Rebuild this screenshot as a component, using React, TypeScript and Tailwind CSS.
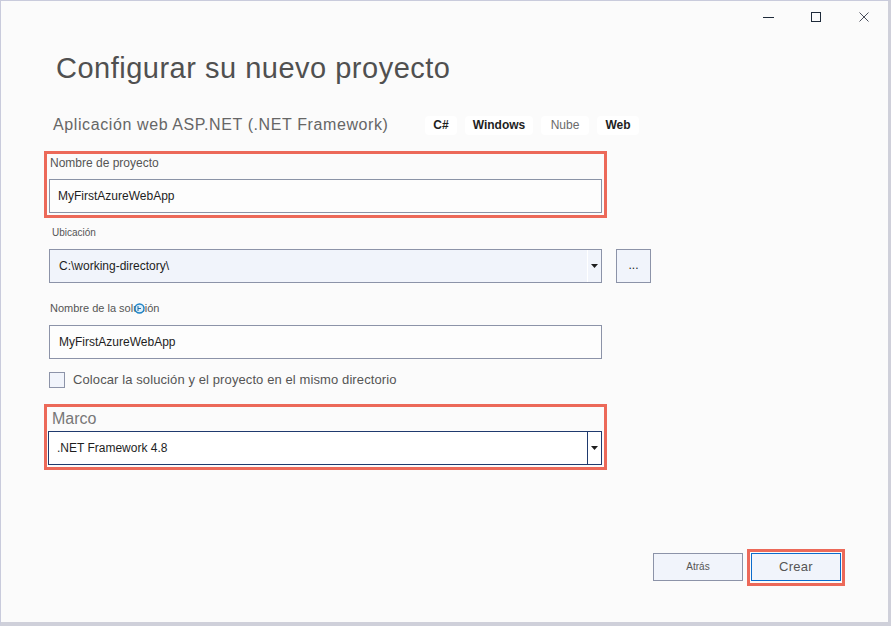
import React from "react";

const font = { fontFamily: '"Liberation Sans", Arial, sans-serif' };

function Arrow() {
  return (
    <svg width="7" height="4" viewBox="0 0 7 4" className="block">
      <path d="M0 0 H7 L3.5 4 Z" fill="#1e1e1e" />
    </svg>
  );
}

function Tag({ children, muted }: { children: React.ReactNode; muted?: boolean }) {
  return (
    <div
      className={`h-[19px] flex items-center justify-center rounded-[4px] bg-white text-[12px] ${
        muted ? "text-[#6b6b6b] font-normal" : "text-[#1e1e1e] font-bold"
      }`}
    >
      {children}
    </div>
  );
}

export default function App() {
  return (
    <div
      style={font}
      className="w-[891px] h-[626px] bg-[#fbfbfb] border-t border-l border-[#c9cbdc] border-r-[3px] border-r-[#cfd0da] border-b-[4px] border-b-[#cfd0da] flex flex-col text-[#1e1e1e] overflow-hidden"
    >
      {/* title bar */}
      <div className="h-[31px] flex justify-end items-center pr-0">
        <div className="w-[48px] flex justify-center">
          <div className="w-[11px] h-[1px] bg-[#1e2a3a] mt-[2px]" />
        </div>
        <div className="w-[48px] flex justify-center">
          <div className="w-[10px] h-[10px] border border-[#1e2a3a]" />
        </div>
        <div className="w-[48px] flex justify-center">
          <svg width="10" height="10" viewBox="0 0 10 10">
            <path d="M0.5 0.5 L9.5 9.5 M9.5 0.5 L0.5 9.5" stroke="#4a4f5c" strokeWidth="1" />
          </svg>
        </div>
      </div>

      <div className="pl-[43px] flex flex-col">
        {/* Title */}
        <div className="pl-[12px] mt-[20px] text-[29px] leading-[32px] text-[#505050] tracking-[0.5px]">
          Configurar su nuevo proyecto
        </div>

        {/* Subtitle + tags */}
        <div className="mt-[29px] flex items-center h-[24px]">
          <div className="pl-[9px] text-[16px] text-[#666] tracking-[0.6px] w-[380px]">
            Aplicación web ASP.NET (.NET Framework)
          </div>
          <div className="flex items-center gap-[8px] ml-[1px]">
            <div className="w-[32px]"><Tag>C#</Tag></div>
            <div className="w-[68px]"><Tag>Windows</Tag></div>
            <div className="w-[48px]"><Tag muted>Nube</Tag></div>
            <div className="w-[42px]"><Tag>Web</Tag></div>
          </div>
        </div>

        {/* Red box 1 */}
        <div className="mt-[14px] w-[563px] border-[3px] border-[#ec6959] pl-[2px] pr-[2px] pb-[2px]">
          <div className="h-[25px] pt-[1px] pl-[1px] text-[12px] leading-[16px] text-[#555]">
            Nombre de proyecto
          </div>
          <div className="h-[34px] w-[553px] border border-[#8a93a6] bg-[#fdfdfd] flex items-center pl-[8px] text-[12px] text-[#1e1e1e]">
            MyFirstAzureWebApp
          </div>
        </div>

        {/* Ubicación */}
        <div className="mt-[9px] pl-[8px] h-[24px] text-[10px] leading-[12px] text-[#555]">
          Ubicación
        </div>
        <div className="pl-[5px] flex items-center mt-[-2px]">
          <div className="h-[34px] w-[553px] border border-[#8c93a8] bg-[#f1f4fb] flex items-center">
            <div className="flex-1 pl-[9px] text-[12px] text-[#1e1e1e]">C:\working-directory\</div>
            <div className="w-[1px] h-full bg-white" />
            <div className="w-[13px] flex justify-center">
              <Arrow />
            </div>
          </div>
          <div className="ml-[14px] h-[34px] w-[35px] border border-[#8c93a8] bg-[#f1f4fb] flex items-center justify-center text-[12px] leading-none text-[#1e1e1e] pb-[2px]">
            ...
          </div>
        </div>

        {/* Nombre de la solución */}
        <div className="mt-[19px] pl-[6px] h-[23px] text-[11px] leading-[13px] text-[#555] relative">
          Nombre de la solución
          <svg
            width="11"
            height="11"
            viewBox="0 0 11 11"
            className="absolute left-[90px] top-[1px]"
          >
            <circle cx="5.5" cy="5.5" r="4.5" fill="#dff0fb" stroke="#1d83c6" strokeWidth="1.4" />
            <path d="M4 3 V8 M4 5.5 H7" stroke="#1d6fa8" strokeWidth="1" />
          </svg>
        </div>
        <div className="pl-[5px]">
          <div className="h-[34px] w-[553px] border border-[#8c93a8] bg-[#fdfdfd] flex items-center pl-[9px] text-[12px] text-[#1e1e1e]">
            MyFirstAzureWebApp
          </div>
        </div>

        {/* Checkbox */}
        <div className="mt-[11px] pl-[5px] flex items-center">
          <div className="w-[16px] h-[16px] border border-[#8c93a8] bg-[#f1f4fb]" />
          <div className="ml-[8px] text-[13px] text-[#555] tracking-[0.1px]">
            Colocar la solución y el proyecto en el mismo directorio
          </div>
        </div>

        {/* Red box 2 */}
        <div className="mt-[14px] w-[563px] border-[3px] border-[#ec6959] pl-[1px] pr-[2px] pb-[2px]">
          <div className="h-[24px] pt-[3px] pl-[4px] text-[16px] leading-[18px] text-[#777]">Marco</div>
          <div className="h-[34px] w-[554px] border border-[#1f3a6e] bg-white flex items-center">
            <div className="flex-1 pl-[8px] text-[12px] text-[#1e1e1e]">.NET Framework 4.8</div>
            <div className="w-[1px] h-full bg-[#1f3a6e]" />
            <div className="w-[13px] flex justify-center">
              <Arrow />
            </div>
          </div>
        </div>

        {/* Buttons */}
        <div className="mt-[79px] flex items-center">
          <div className="w-[609px] shrink-0" />
          <div className="h-[28px] w-[90px] shrink-0 border border-[#8c93a8] bg-[#f1f4fb] flex items-center justify-center text-[10px] text-[#555] pb-[2px]">
            Atrás
          </div>
          <div className="ml-[4px] w-[98px] h-[37px] shrink-0 border-[3px] border-[#ec6959] flex items-center justify-center">
            <div className="h-[28px] w-[90px] border border-[#0b6bcc] bg-[#f1f4fb] flex items-center justify-center text-[13px] text-[#555] tracking-[0.3px]">
              Crear
            </div>
          </div>
        </div>
      </div>
    </div>
  );
}
